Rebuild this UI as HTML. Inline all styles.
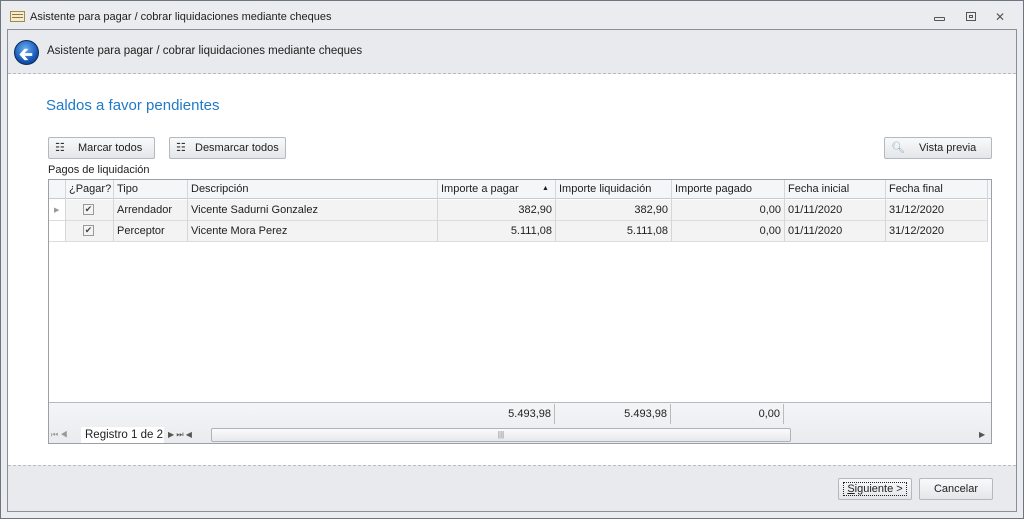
<!DOCTYPE html>
<html><head><meta charset="utf-8"><style>
*{box-sizing:border-box;margin:0;padding:0}
body{width:1024px;height:519px;overflow:hidden;background:#eaecef;font-family:"Liberation Sans",sans-serif;font-size:11px;color:#1e1e1e;position:relative}
.a{position:absolute;white-space:nowrap}
.btn{position:absolute;border:1px solid #b4b8bf;border-radius:2px;background:linear-gradient(#f8f9fa,#e4e6e9);height:22px;font-size:11px;line-height:20px}
.c{position:absolute;height:20px;line-height:20px;padding:0 3px;white-space:nowrap;overflow:hidden}
.r{text-align:right}
.vl{position:absolute;width:1px;background:#d4d6da}
.chk{position:absolute;width:11px;height:11px;border:1px solid #999;background:#f4f4f4;font-size:9px;line-height:9px;text-align:center;color:#444}
</style></head><body>
<div class="a" style="left:0;top:0;width:1024px;height:519px;border:1px solid #6d7580"></div>
<div class="a" style="left:10px;top:11px;width:15px;height:11px;border:1px solid #a08a50;background:#f6edc8"></div>
<div class="a" style="left:12px;top:14px;width:11px;height:1px;background:#8a7a50"></div>
<div class="a" style="left:12px;top:17px;width:11px;height:1px;background:#8a7a50"></div>
<div class="a" style="left:30px;top:11px;font-size:11px">Asistente para pagar / cobrar liquidaciones mediante cheques</div>
<div class="a" style="left:934px;top:17px;width:11px;height:4px;border:1px solid #555;border-radius:1px"></div>
<div class="a" style="left:966px;top:12px;width:10px;height:9px;border:1px solid #555"></div>
<div class="a" style="left:969px;top:15px;width:4px;height:3px;border:1px solid #555"></div>
<div class="a" style="left:995px;top:10px;font-size:12px;color:#555">✕</div>
<div class="a" style="left:7px;top:29px;width:1010px;height:483px;border:1px solid #8a9099;background:#fff"></div>
<div class="a" style="left:8px;top:30px;width:1008px;height:44px;background:#e8eaed;border-bottom:1px dashed #b8bcc2"></div>
<div class="a" style="left:14px;top:40px;width:25px;height:25px;border-radius:50%;background:radial-gradient(circle at 45% 35%,#6ab0f0,#1758b8 60%,#0a2f70);border:1px solid #0b2a5a"></div>
<div class="a" style="left:19px;top:42px;color:#fff;font-size:17px;font-weight:bold">&#129136;</div>
<div class="a" style="left:47px;top:45px;font-size:11.5px">Asistente para pagar / cobrar liquidaciones mediante cheques</div>
<div class="a" style="left:46px;top:97px;font-size:15px;color:#1e7ac8">Saldos a favor pendientes</div>
<div class="btn" style="left:48px;top:137px;width:107px"><span class="a" style="left:6px;top:0;color:#333">☷</span><span class="a" style="left:29px">Marcar todos</span></div>
<div class="btn" style="left:169px;top:137px;width:117px"><span class="a" style="left:6px;top:0;color:#333">☷</span><span class="a" style="left:25px">Desmarcar todos</span></div>
<div class="btn" style="left:884px;top:137px;width:108px"><span class="a" style="left:6px;top:0;color:#8ab">🔍&#xFE0E;</span><span class="a" style="left:34px">Vista previa</span></div>
<div class="a" style="left:48px;top:164px">Pagos de liquidación</div>
<div class="a" style="left:48px;top:179px;width:944px;height:265px;border:1px solid #9aa0a8;background:#fff"></div>
<div class="a" style="left:49px;top:180px;width:942px;height:19px;background:#f5f6f7;border-bottom:1px solid #c8ccd0"></div>
<div class="a" style="left:65px;top:200px;width:923px;height:41px;background:#f3f3f3"></div>
<div class="a" style="left:49px;top:220px;width:939px;height:1px;background:#dcdcdc"></div>
<div class="a" style="left:49px;top:241px;width:939px;height:1px;background:#dcdcdc"></div>
<div class="vl" style="left:65px;top:180px;height:61px"></div>
<div class="vl" style="left:113px;top:180px;height:61px"></div>
<div class="vl" style="left:187px;top:180px;height:61px"></div>
<div class="vl" style="left:437px;top:180px;height:61px"></div>
<div class="vl" style="left:555px;top:180px;height:61px"></div>
<div class="vl" style="left:671px;top:180px;height:61px"></div>
<div class="vl" style="left:784px;top:180px;height:61px"></div>
<div class="vl" style="left:885px;top:180px;height:61px"></div>
<div class="vl" style="left:987px;top:180px;height:61px"></div>
<div class="c" style="left:66px;top:179px">¿Pagar?</div>
<div class="c" style="left:114px;top:179px">Tipo</div>
<div class="c" style="left:188px;top:179px">Descripción</div>
<div class="c" style="left:438px;top:179px">Importe a pagar</div>
<div class="a" style="left:542px;top:185px;font-size:7px">▲</div>
<div class="c" style="left:556px;top:179px">Importe liquidación</div>
<div class="c" style="left:672px;top:179px">Importe pagado</div>
<div class="c" style="left:785px;top:179px">Fecha inicial</div>
<div class="c" style="left:886px;top:179px">Fecha final</div>
<div class="a" style="left:54px;top:206px;font-size:7px;color:#999">▶</div>
<div class="chk" style="left:83px;top:204px">✔</div>
<div class="chk" style="left:83px;top:225px">✔</div>
<div class="c" style="left:114px;top:200px">Arrendador</div>
<div class="c" style="left:188px;top:200px">Vicente Sadurni Gonzalez</div>
<div class="c r" style="left:438px;top:200px;width:117px">382,90</div>
<div class="c r" style="left:556px;top:200px;width:115px">382,90</div>
<div class="c r" style="left:672px;top:200px;width:112px">0,00</div>
<div class="c" style="left:785px;top:200px">01/11/2020</div>
<div class="c" style="left:886px;top:200px">31/12/2020</div>
<div class="c" style="left:114px;top:221px">Perceptor</div>
<div class="c" style="left:188px;top:221px">Vicente Mora Perez</div>
<div class="c r" style="left:438px;top:221px;width:117px">5.111,08</div>
<div class="c r" style="left:556px;top:221px;width:115px">5.111,08</div>
<div class="c r" style="left:672px;top:221px;width:112px">0,00</div>
<div class="c" style="left:785px;top:221px">01/11/2020</div>
<div class="c" style="left:886px;top:221px">31/12/2020</div>
<div class="a" style="left:49px;top:402px;width:942px;height:41px;background:linear-gradient(#f4f5f7,#e9ebee);border-top:1px solid #b4b8bf"></div>
<div class="c r" style="left:438px;top:404px;width:117px;border-right:1px solid #bbb">5.493,98</div>
<div class="c r" style="left:556px;top:404px;width:115px;border-right:1px solid #bbb">5.493,98</div>
<div class="c r" style="left:672px;top:404px;width:112px;border-right:1px solid #bbb">0,00</div>
<div class="a" style="left:51px;top:430px;font-size:8px;color:#999">⏮ ◀</div>
<div class="a" style="left:81px;top:427px;width:83px;height:16px;background:#fff;font-size:11.5px;line-height:16px;padding-left:4px">Registro 1 de 2</div>
<div class="a" style="left:168px;top:430px;font-size:8px;color:#555">▶ ⏭ ◀</div>
<div class="a" style="left:211px;top:428px;width:580px;height:14px;border:1px solid #aeb3ba;border-radius:2px;background:linear-gradient(#fafbfc,#e6e8eb);text-align:center;font-size:8px;line-height:12px;color:#777">|||</div>
<div class="a" style="left:979px;top:430px;font-size:8px;color:#555">▶</div>
<div class="a" style="left:8px;top:465px;width:1008px;height:46px;background:#e8eaed;border-top:1px dashed #b8bcc2"></div>
<div class="btn" style="left:838px;top:478px;width:74px;text-align:center"><span style="border:1px dotted #222;padding:0 3px"><u>S</u>iguiente &gt;</span></div>
<div class="btn" style="left:919px;top:478px;width:74px;text-align:center">Cancelar</div>
</body></html>
